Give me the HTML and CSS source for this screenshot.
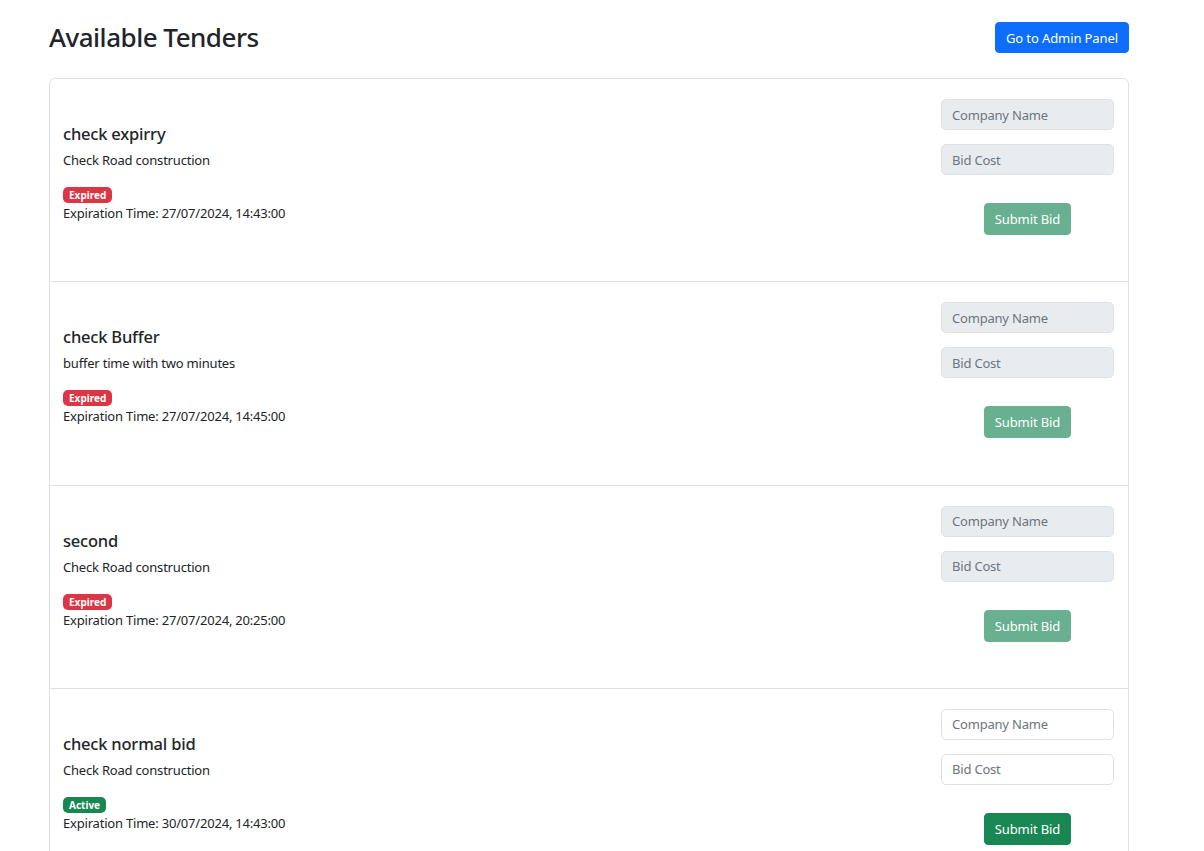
FILE: index.html
```html
<!DOCTYPE html>
<html lang="en">
<head>
<meta charset="utf-8">
<title>Available Tenders</title>
<link rel="stylesheet" href="styles.css">
</head>
<body>
<div class="container">
  <header class="page-header">
    <h1 class="page-title">Available Tenders</h1>
    <button class="btn btn-primary">Go to Admin Panel</button>
  </header>
  <ul class="list">
    <li class="item">
      <div class="info">
        <h5 class="tender-title">check expirry</h5>
        <p class="tender-desc">Check Road construction</p>
        <span class="badge badge-danger">Expired</span>
        <p class="tender-exp">Expiration Time: 27/07/2024, 14:43:00</p>
      </div>
      <form class="bid-form">
        <input class="field" type="text" placeholder="Company Name" disabled>
        <input class="field" type="number" placeholder="Bid Cost" disabled>
        <button class="btn btn-success" type="button" disabled>Submit Bid</button>
      </form>
    </li>
    <li class="item">
      <div class="info">
        <h5 class="tender-title">check Buffer</h5>
        <p class="tender-desc">buffer time with two minutes</p>
        <span class="badge badge-danger">Expired</span>
        <p class="tender-exp">Expiration Time: 27/07/2024, 14:45:00</p>
      </div>
      <form class="bid-form">
        <input class="field" type="text" placeholder="Company Name" disabled>
        <input class="field" type="number" placeholder="Bid Cost" disabled>
        <button class="btn btn-success" type="button" disabled>Submit Bid</button>
      </form>
    </li>
    <li class="item">
      <div class="info">
        <h5 class="tender-title">second</h5>
        <p class="tender-desc">Check Road construction</p>
        <span class="badge badge-danger">Expired</span>
        <p class="tender-exp">Expiration Time: 27/07/2024, 20:25:00</p>
      </div>
      <form class="bid-form">
        <input class="field" type="text" placeholder="Company Name" disabled>
        <input class="field" type="number" placeholder="Bid Cost" disabled>
        <button class="btn btn-success" type="button" disabled>Submit Bid</button>
      </form>
    </li>
    <li class="item">
      <div class="info">
        <h5 class="tender-title">check normal bid</h5>
        <p class="tender-desc">Check Road construction</p>
        <span class="badge badge-success">Active</span>
        <p class="tender-exp">Expiration Time: 30/07/2024, 14:43:00</p>
      </div>
      <form class="bid-form">
        <input class="field" type="text" placeholder="Company Name">
        <input class="field" type="number" placeholder="Bid Cost">
        <button class="btn btn-success" type="button">Submit Bid</button>
      </form>
    </li>
  </ul>
</div>
</body>
</html>
```
FILE: styles.css
```css
* { box-sizing: border-box; }

html, body {
  margin: 0;
  padding: 0;
  background: #fff;
}

body {
  font-family: "Segoe UI", "Noto Sans", "Open Sans", sans-serif;
  font-size: 14px;
  line-height: 1.5;
  color: #212529;
  overflow: hidden;
}

.container {
  width: 1080px;
  margin: 0 0 0 49px;
}

.page-header {
  display: flex;
  align-items: center;
  justify-content: space-between;
  height: 78px;
  padding-bottom: 3px;
}

.page-title {
  margin: 0;
  font-size: 26px;
  font-weight: 500;
  line-height: 1.2;
  letter-spacing: -0.5px;
}

.btn {
  font-family: inherit;
  font-size: 13px;
  line-height: 20px;
  padding: 4px 10px;
  border: 1px solid transparent;
  border-radius: 4px;
  color: #fff;
  cursor: pointer;
  letter-spacing: -0.1px;
}

.btn-primary {
  height: 31px;
  background: #0d6efd;
  border-color: #0d6efd;
}

.btn-success {
  background: #198754;
  border-color: #198754;
}

.btn:disabled {
  opacity: 0.65;
  cursor: default;
}

.list {
  list-style: none;
  margin: 0;
  padding: 0;
  border: 1px solid #dee2e6;
  border-radius: 6px;
}

.item {
  display: flex;
  align-items: flex-start;
  padding: 20px 14px 46.33px 13px;
  border-top: 1px solid #dee2e6;
}

.item:first-child {
  border-top: 0;
}

.info {
  flex: 1;
  padding-top: 25px;
}

.tender-title {
  margin: 0 0 6px;
  font-size: 16.5px;
  font-weight: 500;
  line-height: 20px;
  letter-spacing: -0.2px;
}

.tender-desc {
  margin: 0 0 17px;
  font-size: 13px;
  line-height: 20px;
  letter-spacing: -0.2px;
}

.tender-exp {
  margin: 0;
  font-size: 13px;
  line-height: 20px;
  letter-spacing: -0.2px;
}

.badge {
  display: block;
  width: fit-content;
  height: 16px;
  font-size: 10px;
  font-weight: 700;
  line-height: 10px;
  padding: 3px 6px;
  border-radius: 5px;
  color: #fff;
}

.badge-danger { background: #dc3545; }
.badge-success { background: #198754; }

.bid-form {
  width: 173px;
  display: flex;
  flex-direction: column;
  align-items: center;
}

.field {
  width: 100%;
  height: 31px;
  padding: 4px 10px;
  font-family: inherit;
  font-size: 13px;
  color: #212529;
  background: #fff;
  border: 1px solid #dee2e6;
  border-radius: 5px;
  letter-spacing: -0.2px;
}

.field + .field {
  margin-top: 14px;
}

.field::placeholder {
  color: #6c757d;
}

.field:disabled {
  background: #e9ecef;
}

.bid-form .btn {
  margin-top: 28px;
  height: 32px;
}
```
